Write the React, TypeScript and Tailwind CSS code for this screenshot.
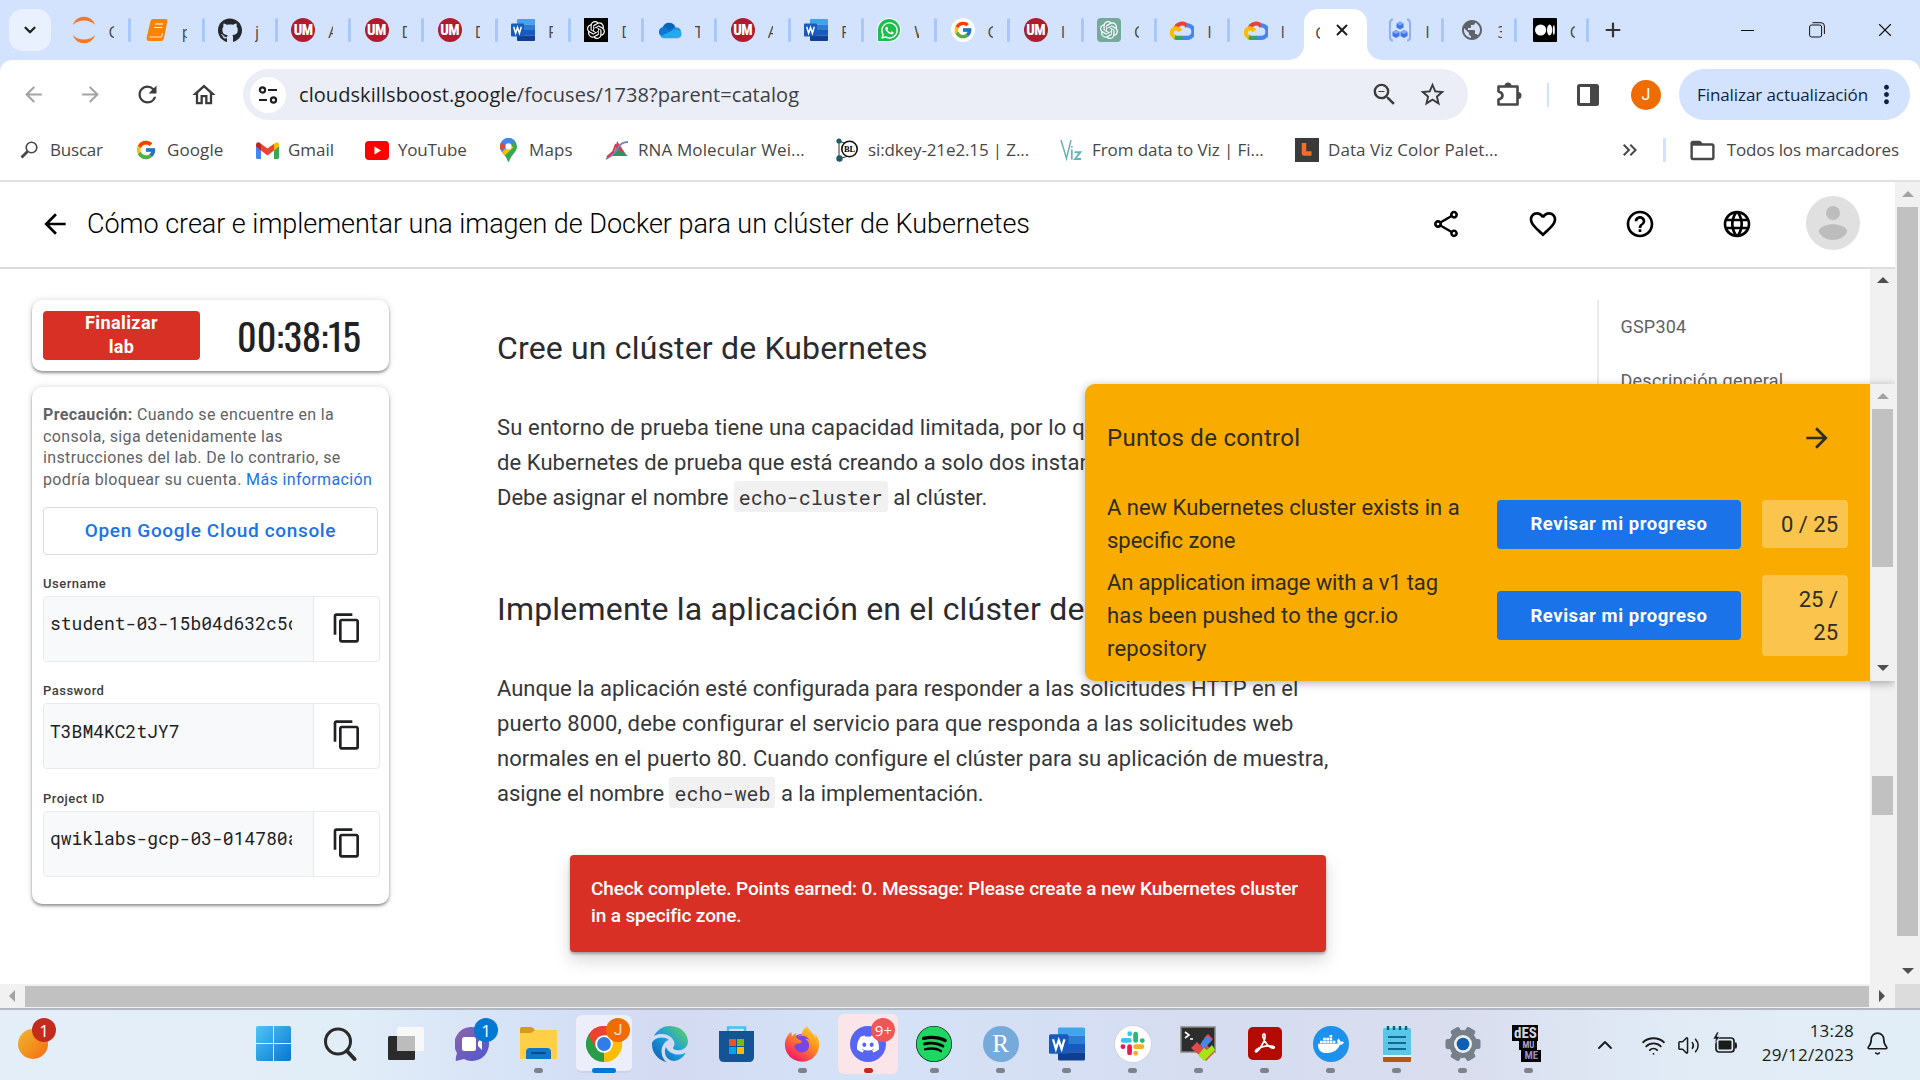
import React from 'react';
import { FaGithub, FaWhatsapp, FaSpotify, FaDiscord, FaDocker, FaEdge, FaFirefoxBrowser } from 'react-icons/fa6';
import { SiOpenai } from 'react-icons/si';
import { FcGoogle } from 'react-icons/fc';
import {
  MdArrowBack, MdArrowForward, MdRefresh, MdOutlineHome, MdStarBorder, MdOutlineShare,
  MdFavoriteBorder, MdHelpOutline, MdLanguage, MdContentCopy, MdFolderOpen, MdKeyboardDoubleArrowRight,
  MdMoreVert, MdPublic, MdZoomOut,
} from 'react-icons/md';
import { ChevronDown, ChevronUp, Plus, Minus, X, Bell, Wifi, Volume2 } from 'lucide-react';

type Node = React.ReactNode;

/* ---------- brand glyphs ---------- */

const Jupyter = () => (
  <svg width="24" height="28" viewBox="0 0 24 28">
    <path d="M1 9C4-2 20-2 23 9C18 3 6 3 1 9Z" fill="#f37726" />
    <path d="M1 19C4 30 20 30 23 19C18 25 6 25 1 19Z" fill="#f37726" />
  </svg>
);

const Book = () => (
  <svg width="22" height="24" viewBox="0 0 22 24">
    <path d="M6.500 1H19.500Q22 1 21.300 4L18 20Q17.500 23 15 23H3Q0 23 .8 19L4.300 4Q5 1 6.500 1Z" fill="#f98207" />
    <path d="M9 6h8M8.200 9.500h8" stroke="#fff" strokeWidth="1.200" />
    <path d="M3 19H15.500L16.500 15" fill="none" stroke="#fde0bd" strokeWidth="1.100" />
  </svg>
);

const UM = () => (
  <span className="flex size-6 items-center justify-center rounded-full bg-[#b01c2e] font-['Roboto_Condensed',Roboto,sans-serif] text-[15px] font-extrabold tracking-[-0.5px] text-white">
    UM
  </span>
);

const Word = ({ size = 24 }: { size?: number }) => (
  <svg width={size} height={size} viewBox="0 0 24 24">
    <path d="M6 2q0-1 1-1h16q1 0 1 1v4.500H6Z" fill="#41a5ee" />
    <path d="M6 6.500h18V12H6Z" fill="#2b7cd3" />
    <path d="M6 12h18v5.500H6Z" fill="#185abd" />
    <path d="M6 17.500h18V22q0 1-1 1H7q-1 0-1-1Z" fill="#103f91" />
    <rect x="0" y="5.500" width="13" height="13" rx="1" fill="#185abd" />
    <path d="M2.700 8.800 4.600 15.300 6.500 9.500 8.400 15.300 10.300 8.800" stroke="#fff" strokeWidth="1.500" fill="none" />
  </svg>
);

const OneDrive = () => (
  <svg width="25" height="17" viewBox="0 0 25 17">
    <path d="M4 13A5 5 0 0 1 5 5 7 7 0 0 1 18 4.500L14 11Z" fill="#0364b8" />
    <path d="M5 15A5 5 0 0 1 4 5.500Q8 4 11 7L16 14Z" fill="#0f78d4" />
    <path d="M13 8 18 5Q23 5 24 9L19 12Z" fill="#1490df" />
    <path d="M2.500 14.500 15 8.500Q20 6 24 9.500 26 16 20 16.500H6Q4 16.500 2.500 14.500Z" fill="#28a8ea" />
  </svg>
);

const GptTile = ({ green = false }: { green?: boolean }) => (
  <span className={green ? 'flex size-6 items-center justify-center rounded-[4px] bg-[#74aa9c] text-white' : 'flex size-6 items-center justify-center bg-black text-white'}>
    <SiOpenai size={18} />
  </span>
);

const WhatsApp = () => (
  <span className="flex size-6 items-center justify-center rounded-full rounded-bl-[3px] bg-white">
    <span className="flex size-[22px] items-center justify-center rounded-full rounded-bl-[3px] bg-[#1ebe4d] text-white">
      <FaWhatsapp size={19} />
    </span>
  </span>
);

const GoogleTab = () => (
  <span className="flex size-6 items-center justify-center rounded-full bg-white"><FcGoogle size={20} /></span>
);

const Cloud = () => (
  <svg width="24" height="20" viewBox="0 0 24 20" fill="none" strokeWidth="4.200">
    <path d="M5.500 9A6.600 6.600 0 0 1 17.500 6.500" stroke="#ea4335" />
    <path d="M16.500 5.500A6 6 0 0 1 18 17.800H12" stroke="#4285f4" />
    <path d="M12.500 17.800H6.500L4 17" stroke="#34a853" />
    <path d="M5 16.800A4.200 4.200 0 0 1 7 8.600Q9 8.800 10.500 11" stroke="#fbbc05" />
  </svg>
);

const Cubes = () => (
  <svg width="24" height="24" viewBox="0 0 24 24">
    <path d="M5 1.500Q2 1.500 2 5v4.500Q2 12 .8 12 2 12 2 14.500V19q0 3.500 3 3.500M19 1.500q3 0 3 3.500v4.500q0 2.500 1.200 2.500-1.200 0-1.200 2.500V19q0 3.500-3 3.500" fill="none" stroke="#8fb0f7" strokeWidth="2" />
    <path d="m12 3.500 3.500 2v4L12 11.500l-3.500-2v-4ZM8 12l3.500 2v4L8 20l-3.500-2v-4ZM16 12l3.500 2v4L16 20l-3.500-2v-4Z" fill="#3f74e8" />
    <path d="m12 3.500 3.500 2-3.500 2-3.500-2ZM8 12l3.500 2L8 16l-3.500-2ZM16 12l3.500 2-3.500 2-3.500-2Z" fill="#86a9f7" />
  </svg>
);

const Medium = () => (
  <svg width="24" height="24" viewBox="0 0 24 24">
    <rect width="24" height="24" rx="1" fill="#000" />
    <circle cx="7.600" cy="12" r="5.600" fill="#fff" />
    <ellipse cx="16.600" cy="12" rx="2.600" ry="5.400" fill="#fff" />
    <ellipse cx="20.800" cy="12" rx="1" ry="4.800" fill="#fff" />
  </svg>
);

const Gmail = () => (
  <svg width="23" height="17" viewBox="0 0 23 17">
    <path d="M0 3v12.500Q0 17 1.500 17H5V7Z" fill="#4285f4" />
    <path d="M23 3v12.500q0 1.500-1.500 1.500H18V7Z" fill="#34a853" />
    <path d="M5 2v6.500L0 4.500V2.500Q.5-1 4 .8Z" fill="#c5221f" />
    <path d="M18 2v6.500l5-4V2.500Q22.500-1 19 .8Z" fill="#fbbc04" />
    <path d="M5 1.800 11.500 6.500 18 1.800v6.700L11.500 13.500 5 8.500Z" fill="#ea4335" />
  </svg>
);

const YouTube = () => (
  <svg width="24" height="19" viewBox="0 0 24 19">
    <rect width="24" height="19" rx="4" fill="#f00" />
    <path d="M9.500 5.500v8L16 9.500Z" fill="#fff" />
  </svg>
);

const Maps = () => (
  <svg width="17" height="24" viewBox="0 0 17 24">
    <clipPath id="pin"><path d="M8.500 0A8.500 8.500 0 0 1 17 8.500C17 14 11 17 9.200 23.300Q8.500 24.500 7.800 23.300C6 17 0 14 0 8.500A8.500 8.500 0 0 1 8.500 0Z" /></clipPath>
    <g clipPath="url(#pin)">
      <rect width="17" height="24" fill="#34a853" />
      <path d="M0 0H17L0 20Z" fill="#4285f4" />
      <path d="M-1 3 7 8-1 14Z" fill="#ea4335" />
      <path d="M8 8-1 17 3 19 14 9Z" fill="#fbbc04" />
    </g>
    <circle cx="8.500" cy="8.300" r="3.100" fill="#fff" />
  </svg>
);

const Rna = () => (
  <svg width="24" height="20" viewBox="0 0 24 20">
    <path d="M12 1 22 16H9Z" fill="#d5394b" />
    <path d="M13 9 23 16H7Z" fill="#2f9460" />
    <path d="M1 19Q10 14 13 8T23 2" fill="none" stroke="#6f86b8" strokeWidth="2" />
    <path d="M2 17 8 12 11 4" fill="none" stroke="#d5394b" strokeWidth="2" />
  </svg>
);

const Bl = () => (
  <svg width="22" height="24" viewBox="0 0 22 24">
    <path d="M3 3v18L12 18M3 3l8 3" stroke="#333" fill="none" />
    <circle cx="3" cy="3" r="2.600" fill="#1d5c63" />
    <circle cx="3.500" cy="20.500" r="3.200" fill="#1d5c63" />
    <circle cx="13.500" cy="11" r="7.700" fill="#fff" stroke="#111" strokeWidth="1.600" />
    <text x="13.500" y="14" textAnchor="middle" fontFamily="Liberation Serif, serif" fontWeight="700" fontSize="8.500">BL</text>
  </svg>
);

const Viz = () => (
  <svg width="22" height="22" viewBox="0 0 22 22" fill="none" stroke="#69b3b2">
    <path d="M1 1 6.500 19.500 11 1" strokeWidth="1.500" />
    <path d="M11.800 10.500v10M11.800 7v1.500" strokeWidth="1.800" />
    <path d="M14.500 13.300h5.800L15 20h6" strokeWidth="1.900" />
  </svg>
);

const LTile = () => (
  <svg width="24" height="24" viewBox="0 0 24 24">
    <rect width="24" height="24" fill="#3a3a3a" />
    <path d="M9 5v10.500h7.500" fill="none" stroke="#fb6a28" strokeWidth="4.500" strokeLinejoin="round" />
  </svg>
);

const SearchGlyph = () => (
  <svg width="18" height="18" viewBox="0 0 18 18" fill="none" stroke="#474747">
    <circle cx="11.500" cy="6.500" r="5.300" strokeWidth="1.600" />
    <path d="M7.500 10.500 1.500 16.500" strokeWidth="2.800" />
  </svg>
);

const Puzzle = () => (
  <svg width="26" height="26" viewBox="0 0 26 26">
    <path d="M2.500 4.500H21.500V22.500H2.500V17.500Q6.500 16.500 6.500 13.500 6.500 10.500 2.500 9.500Z" fill="none" stroke="#474747" strokeWidth="2.600" strokeLinejoin="round" />
    <path d="M8.500 4A3.500 3.500 0 0 1 15.500 4ZM22 10A3.500 3.500 0 0 1 22 17Z" fill="#474747" />
  </svg>
);

/* ---------- browser chrome ---------- */

const leftTabs: [Node, string][] = [
  [<Jupyter />, 'C'], [<Book />, 'p'], [<FaGithub size={25} color="#24292f" />, 'j'], [<UM />, 'A'], [<UM />, 'D'], [<UM />, 'D'],
  [<Word />, 'P'], [<GptTile />, 'D'], [<OneDrive />, 'T'], [<UM />, 'A'], [<Word />, 'P'], [<WhatsApp />, 'W'],
  [<GoogleTab />, 'G'], [<UM />, 'I'], [<GptTile green />, 'C'], [<Cloud />, 'I'], [<Cloud />, 'I'],
];
const rightTabs: [Node, string][] = [
  [<Cubes />, 'I'], [<MdPublic size={26} color="#5f6368" />, '3'], [<Medium />, 'C'],
];

const Tab = ({ icon, label, last = false, wide = false }: { icon: Node; label: string; last?: boolean; wide?: boolean }) => (
  <div className={wide ? 'flex h-6 w-[73.25px] shrink-0 items-center' : 'flex h-6 w-[72.2px] shrink-0 items-center'}>
    <span className={wide ? 'ml-[13.5px] flex w-6 justify-center' : 'ml-4 flex w-6 justify-center'}>{icon}</span>
    <span className="ml-[13px] w-[5px] overflow-hidden pt-1 text-[16px] leading-5 text-[#474747]">{label}</span>
    {!last && <span className="ml-auto h-6 w-[3px] rounded-sm bg-[#a8c7fa]" />}
  </div>
);

const Notch = ({ right = false }: { right?: boolean }) => (
  <svg width="15" height="15" viewBox="0 0 15 15" className={right ? 'absolute -right-[15px] bottom-0 -scale-x-100' : 'absolute bottom-0 -left-[15px]'}>
    <path d="M15 0V15H0A15 15 0 0 0 15 0Z" fill="#fff" />
  </svg>
);

const TabStrip = () => (
  <div className="flex h-[60px] items-center bg-[#d3e3fd]">
    <div className="ml-[9px] flex size-[42px] items-center justify-center rounded-[14px] bg-[#e9f1fe]">
      <ChevronDown size={18} strokeWidth={3} color="#1f1f1f" />
    </div>
    <div className="ml-[7px] flex">
      {leftTabs.map(([icon, label], i) => <Tab key={i} icon={icon} label={label} wide last={i === 16} />)}
    </div>
    <div className="relative ml-px flex h-[51px] w-[63px] items-center self-end rounded-t-[14px] bg-white">
      <Notch />
      <span className="mb-1 ml-[11px] w-[5px] overflow-hidden text-[16px] text-[#474747]">C</span>
      <X size={18} strokeWidth={2.6} color="#1f1f1f" className="mb-[9px] ml-[13px]" />
      <Notch right />
    </div>
    <div className="ml-[5px] flex">
      {rightTabs.map(([icon, label], i) => <Tab key={i} icon={icon} label={label} />)}
    </div>
    <Plus size={22} strokeWidth={2.4} color="#333" className="ml-[13px]" />
    <div className="ml-auto flex items-center text-[#111]">
      <Minus size={21} strokeWidth={1.2} />
      <svg width="16" height="16" viewBox="0 0 16 16" fill="none" stroke="currentColor" className="ml-[51px]">
        <rect x=".6" y="3" width="12" height="12" rx="2" />
        <path d="M3.500 .7H12Q15.400 .7 15.400 4V12" />
      </svg>
      <X size={22} strokeWidth={1.2} className="mr-6 ml-[49px]" />
    </div>
  </div>
);

const Toolbar = () => (
  <div className="bg-[#d3e3fd]">
    <div className="flex h-[60px] items-center rounded-t-[12px] bg-white pt-[9px]">
      <MdArrowBack size={25} color="#a3a3a3" className="ml-[21px]" />
      <MdArrowForward size={25} color="#a3a3a3" className="ml-8" />
      <MdRefresh size={27} color="#3c3c3c" className="ml-[31px]" />
      <MdOutlineHome size={28} color="#3c3c3c" className="ml-[29px]" />
      <div className="ml-[25px] flex h-[51px] w-[1225px] items-center rounded-full bg-[#ebeef7]">
        <div className="ml-[7px] flex size-9 items-center justify-center rounded-full bg-white">
          <svg width="20" height="18" viewBox="0 0 20 18" fill="none" stroke="#1f1f1f" strokeWidth="2.200">
            <circle cx="4.500" cy="4" r="2.600" /><path d="M10 4h9M1 14h8" /><circle cx="15.500" cy="14" r="2.600" />
          </svg>
        </div>
        <span className="ml-[13px] text-[20px] tracking-[0.07px] text-[#3c4043]">
          <span className="text-[#1f1f1f]">cloudskillsboost.google</span>/focuses/1738?parent=catalog
        </span>
        <MdZoomOut size={29} color="#3c3c3c" className="mr-[19px] ml-auto" />
        <MdStarBorder size={29} color="#3c3c3c" className="mr-[21px]" />
      </div>
      <span className="ml-7 flex"><Puzzle /></span>
      <span className="ml-[25px] h-6 w-[2px] bg-[#d3e3fd]" />
      <svg width="22" height="22" viewBox="0 0 22 22" className="ml-7">
        <rect x="1.500" y="1.500" width="19" height="19" rx="1" fill="none" stroke="#474747" strokeWidth="3" />
        <rect x="13" y="1" width="8" height="20" fill="#474747" />
      </svg>
      <span className="ml-8 flex size-[30px] items-center justify-center rounded-full bg-[#ef6c00] font-['Roboto',sans-serif] text-[16px] text-white">J</span>
      <div className="ml-[18px] flex h-[51px] w-[231px] items-center rounded-full bg-[#d3e3fd] pl-[18px] text-[17px] tracking-[-0.08px] whitespace-nowrap text-[#0b1f4b]">
        Finalizar actualización
        <MdMoreVert size={29} className="ml-1" />
      </div>
    </div>
  </div>
);

const bookmarks: { icon: Node; label: string; cls: string }[] = [
  { icon: <SearchGlyph />, label: 'Buscar', cls: 'w-[117px] tracking-[-0.2px]' },
  { icon: <FcGoogle size={22} />, label: 'Google', cls: 'w-[121px] tracking-[0.1px]' },
  { icon: <Gmail />, label: 'Gmail', cls: 'w-[110px]' },
  { icon: <YouTube />, label: 'YouTube', cls: 'w-[131px] tracking-[-0.2px]' },
  { icon: <Maps />, label: 'Maps', cls: 'w-[109px] tracking-[0.1px]' },
  { icon: <Rna />, label: 'RNA Molecular Wei...', cls: 'w-[230px] tracking-[0.12px]' },
  { icon: <Bl />, label: 'si:dkey-21e2.15 | Z...', cls: 'w-[224px] tracking-[-0.12px]' },
  { icon: <Viz />, label: 'From data to Viz | Fi...', cls: 'w-[236px] tracking-[-0.08px]' },
  { icon: <LTile />, label: 'Data Viz Color Palet...', cls: 'w-[220px] tracking-[0.08px]' },
];

const Bookmarks = () => (
  <div className="flex h-[62px] items-center border-b-2 border-[#e0e0e0] bg-white pl-[17px] text-[17px] whitespace-nowrap text-[#474747]">
    {bookmarks.map((b) => (
      <div key={b.label} className={'flex shrink-0 items-center ' + b.cls}>
        <span className="mr-[9px] flex w-6 justify-center">{b.icon}</span>
        {b.label}
      </div>
    ))}
    <MdKeyboardDoubleArrowRight size={24} className="ml-auto" />
    <span className="ml-[21px] h-6 w-[3px] bg-[#d3e3fd]" />
    <MdFolderOpen size={29} className="mr-[10px] ml-[22px]" />
    <span className="mr-[21px] tracking-[-0.12px]">Todos los marcadores</span>
  </div>
);

/* ---------- lab page ---------- */

const PageHeader = () => (
  <div className="flex h-[87px] items-center border-b-2 border-[#dadce0] bg-white text-black">
    <MdArrowBack size={32} className="-mt-[2px] ml-[39px]" />
    <h1 className="ml-4 text-[27px] font-light tracking-[-0.03px] whitespace-nowrap">
      Cómo crear e implementar una imagen de Docker para un clúster de Kubernetes
    </h1>
    <div className="-mt-[2px] ml-auto flex items-center gap-[65px]">
      <MdOutlineShare size={32} /><MdFavoriteBorder size={32} /><MdHelpOutline size={32} /><MdLanguage size={32} />
    </div>
    <svg width="54" height="54" viewBox="0 0 54 54" className="-mt-1 mr-[35px] ml-[53.5px]">
      <circle cx="27" cy="27" r="27" fill="#e0e0e0" />
      <circle cx="27" cy="17" r="7" fill="#bdbdbd" />
      <path d="M12.500 35C16 26 38 26 41.500 35 37 47 17 47 12.500 35Z" fill="#bdbdbd" />
    </svg>
  </div>
);

const Field = ({ label, value }: { label: string; value: string }) => (
  <div className="mb-[21.5px]">
    <div className="mb-1 text-[13px] leading-4 font-medium tracking-[0.5px] text-[#3c4043]">{label}</div>
    <div className="flex h-[66px] w-[337px] overflow-hidden rounded-[4px] border border-[#e8eaed]">
      <div className="w-[270px] border-r border-[#e8eaed] bg-[#f8f9fb] pt-[13.5px] pl-[6px]">
        <div className="w-[242px] overflow-hidden font-['Roboto_Mono','Liberation_Mono',monospace] text-[18px] leading-[26px] whitespace-nowrap text-[#202124]">{value}</div>
      </div>
      <div className="flex flex-1 items-center justify-center pb-[2px]"><MdContentCopy size={32} color="#202124" /></div>
    </div>
  </div>
);

const card = 'rounded-[10px] bg-white shadow-[0_2px_3px_rgba(0,0,0,0.38),0_0_7px_rgba(0,0,0,0.13)]';

const LabPanel = () => (
  <aside className="ml-8 w-[357px] shrink-0 pt-[31px]">
    <div className={'flex h-[71px] items-center pl-[11px] ' + card}>
      <button className="h-[49px] w-[157px] rounded-[4px] bg-[#d93025] px-8 pb-[3px] text-[18px] leading-6 font-bold tracking-[0.4px] text-white">Finalizar lab</button>
      <span className="-mt-[2px] ml-[37px] font-['Oswald','Roboto_Condensed',sans-serif] text-[38px] leading-none text-[#202124]">00:38:15</span>
    </div>
    <div className={'mt-4 h-[517px] px-[11px] pt-[17px] ' + card}>
      <p className="text-[16px] leading-[21.6px] tracking-[0.36px] whitespace-nowrap text-[#5f6368]">
        <b>Precaución:</b> Cuando se encuentre en la<br />consola, siga detenidamente las<br />
        instrucciones del lab. De lo contrario, se<br />podría bloquear su cuenta.{' '}
        <a className="text-[#1a73e8]">Más información</a>
      </p>
      <button className="mt-[17px] mb-[20.5px] h-12 w-[335px] rounded-[4px] border border-[#dadce0] text-[19px] font-medium tracking-[0.65px] text-[#1a73e8]">
        Open Google Cloud console
      </button>
      <Field label="Username" value="student-03-15b04d632c5d" />
      <Field label="Password" value="T3BM4KC2tJY7" />
      <Field label="Project ID" value="qwiklabs-gcp-03-014780a" />
    </div>
  </aside>
);

const Code = ({ children }: { children: Node }) => (
  <code className="inline-block h-[31px] rounded-[3px] bg-[#f1f1f1] px-[5px] align-baseline font-['Roboto_Mono','Liberation_Mono',monospace] text-[20px] leading-[32px] tracking-normal text-[#37383b]">{children}</code>
);

const Article = () => (
  <main className="ml-[108px] w-[860px] shrink-0 text-[22px] leading-[35px] whitespace-nowrap text-[#35373b]">
    <h2 className="mt-[59px] text-[32px] leading-10 tracking-[0.16px] text-[#2a2b2e]">Cree un clúster de Kubernetes</h2>
    <p className="mt-[42px] tracking-[0.15px]">
      Su entorno de prueba tiene una capacidad limitada, por lo que<br />
      <span className="tracking-[0.08px]">de Kubernetes de prueba que está creando a solo dos instancias.</span>
    </p>
    <p className="h-[35px]">Debe asignar el nombre <Code>echo-cluster</Code> al clúster.</p>
    <h2 className="mt-[74px] text-[32px] leading-10 tracking-[0.2px] text-[#2a2b2e]">Implemente la aplicación en el clúster de</h2>
    <p className="mt-[42px]">
      <span className="tracking-[-0.01px]">Aunque la aplicación esté configurada para responder a las solicitudes HTTP en el</span><br />
      <span className="tracking-[0.17px]">puerto 8000, debe configurar el servicio para que responda a las solicitudes web</span><br />
      <span className="tracking-[0.07px]">normales en el puerto 80. Cuando configure el clúster para su aplicación de muestra,</span>
    </p>
    <p className="h-[35px] tracking-[-0.06px]">asigne el nombre <Code>echo-web</Code> a la implementación.</p>
  </main>
);

const Toc = () => (
  <nav className="mt-[31px] ml-auto h-[300px] w-[273px] border-l-2 border-[#e8eaed] pl-[21.5px] text-[18px] leading-6 text-[#5f6368]">
    <div className="mt-[15px] tracking-[0.2px]">GSP304</div>
    <div className="mt-[30px] tracking-[0.25px]">Descripción general</div>
  </nav>
);

const Check = ({ text, score, tall = false }: { text: Node; score: string; tall?: boolean }) => (
  <div className="flex items-center">
    <div className="w-[390px] whitespace-nowrap">{text}</div>
    <button className="h-[49px] w-[244px] rounded-[4px] bg-[#1a73e8] text-[18.5px] leading-6 font-bold tracking-[0.55px] text-white">Revisar mi progreso</button>
    <div className={tall ? 'ml-[21px] h-[81px] w-[86px] rounded-[4px] bg-white/30 py-2 pr-[10px] pl-7 text-right' : 'ml-[21px] h-12 w-[86px] rounded-[4px] bg-white/30 py-2 pr-[10px] text-right whitespace-nowrap'}>{score}</div>
  </div>
);

const Arrow = ({ dir, dim = false }: { dir: 'up' | 'down' | 'left' | 'right'; dim?: boolean }) => {
  const d = { up: 'M0 8 6 2 12 8Z', down: 'M0 3 6 9 12 3Z', left: 'M8 0 2 6 8 12Z', right: 'M3 0 9 6 3 12Z' }[dir];
  return <svg width="12" height="12" viewBox="0 0 12 12"><path d={d} fill={dim ? '#a3a3a3' : '#4f4f4f'} /></svg>;
};

const Checkpoints = () => (
  <section className="absolute top-[115px] left-[1085px] flex h-[297px] w-[810px] overflow-hidden rounded-l-[10px] bg-[#f9ab00] shadow-[0_2px_10px_rgba(0,0,0,0.32)]">
    <div className="w-[785px] pl-[22px] text-[22px] leading-[33px] text-[#2f2c22]">
      <div className="mt-9 flex items-center justify-between text-[24px] leading-9 tracking-[0.3px]">
        Puntos de control<MdArrowForward size={32} className="mr-[37px]" />
      </div>
      <div className="mt-5 flex flex-col gap-[9px] pt-[15px]">
        <Check text={<>A new Kubernetes cluster exists in a<br />specific zone</>} score="0 / 25" />
        <Check text={<><span className="tracking-[-0.14px]">An application image with a v1 tag</span><br /><span className="tracking-[0.15px]">has been pushed to the gcr.io<br />repository</span></>} score="25 / 25" tall />
      </div>
    </div>
    <div className="flex w-[25px] flex-col items-center justify-between bg-[#f1f1f1] py-[7px]">
      <Arrow dir="up" dim />
      <div className="mt-1.5 mb-auto h-[158px] w-[21px] bg-[#c1c1c1]" />
      <Arrow dir="down" />
    </div>
  </section>
);

const Toast = () => (
  <div className="absolute top-[586px] left-[570px] h-[97px] w-[756px] rounded-[4px] bg-[#d93025] px-[21px] pt-5 text-[19px] leading-[27px] font-medium tracking-[-0.13px] whitespace-nowrap text-white shadow-[0_2px_3px_rgba(0,0,0,0.3),0_8px_18px_rgba(0,0,0,0.16)]">
    Check complete. Points earned: 0. Message: Please create a new Kubernetes cluster<br />in a specific zone.
  </div>
);

const Page = () => (
  <div className="flex h-[802px]">
    <div className="flex w-[1895px] flex-col font-['Roboto',sans-serif]">
      <PageHeader />
      <div className="relative flex h-[715px] overflow-hidden bg-white">
        <LabPanel />
        <Article />
        <Toc />
        <div className="flex w-[25px] shrink-0 flex-col items-center bg-[#f1f1f1] pt-[6px]">
          <Arrow dir="up" />
          <div className="mt-[489px] h-[39px] w-[21px] bg-[#c1c1c1]" />
        </div>
        <Checkpoints />
        <Toast />
      </div>
    </div>
    <div className="flex w-[25px] flex-col items-center bg-[#f1f1f1] pt-[7px] pb-[7px]">
      <Arrow dir="up" dim />
      <div className="mt-[6px] h-[729px] w-[21px] bg-[#c1c1c1]" />
      <span className="mt-auto flex"><Arrow dir="down" /></span>
    </div>
  </div>
);

const HScroll = () => (
  <div className="flex h-[24px] items-center bg-[#f1f1f1]">
    <span className="flex w-[25px] justify-center"><Arrow dir="left" dim /></span>
    <span className="h-[21px] w-[1844px] bg-[#c1c1c1]" />
    <span className="flex w-[26px] justify-center"><Arrow dir="right" /></span>
    <span className="h-full w-[25px] bg-[#dcdcdc]" />
  </div>
);

/* ---------- taskbar ---------- */

const Start = () => (
  <svg width="35" height="35" viewBox="0 0 35 35" className="mr-px">
    <defs><linearGradient id="win" x1="0" y1="0" x2="1" y2="1" gradientUnits="objectBoundingBox"><stop stopColor="#4cc8f8" /><stop offset="1" stopColor="#0a74d0" /></linearGradient></defs>
    <path d="M0 2Q0 0 2 0H17V17H0ZM18 0H33Q35 0 35 2V17H18ZM0 18H17V35H2Q0 35 0 33ZM18 18H35V33Q35 35 33 35H18Z" fill="url(#win)" />
  </svg>
);
const Search = () => (
  <svg width="34" height="34" viewBox="0 0 34 34" fill="none" stroke="#2b2b2b">
    <circle cx="15" cy="14.500" r="12.500" strokeWidth="3" /><path d="M24 24 31.500 32" strokeWidth="4" strokeLinecap="round" />
  </svg>
);
const TaskView = () => (
  <svg width="36" height="34" viewBox="0 0 36 34">
    <rect x="0" y="9" width="27" height="24" rx="1.500" fill="#2b2b2b" />
    <rect x="9" y="0" width="27" height="24" rx="1.500" fill="#f8f8f8" />
    <rect x="9" y="9" width="18" height="15" fill="#bcbcbc" />
  </svg>
);
const Chat = () => (
  <svg width="34" height="34" viewBox="0 0 34 34">
    <defs><linearGradient id="chat" x1="0" y1="0" x2="1" y2="1"><stop stopColor="#8f63a8" /><stop offset="1" stopColor="#4f57d0" /></linearGradient></defs>
    <path d="M17 0A17 17 0 1 1 9 32L1 34Q0 33 2 26A17 17 0 0 1 17 0Z" fill="url(#chat)" />
    <rect x="7" y="10" width="14" height="14" rx="2.500" fill="#fff" /><path d="m23 15 4-4v12l-4-4Z" fill="#fff" />
  </svg>
);
const Explorer = () => (
  <svg width="37" height="33" viewBox="0 0 37 33">
    <path d="M0 2Q0 0 2 0H11Q13 0 15 3V12H0Z" fill="#dc9a10" />
    <path d="M0 7Q0 6 1 6H11L15 3H36Q37 3 37 4V31Q37 32 36 32H1Q0 32 0 31Z" fill="#ffcf48" />
    <path d="M6 32V25Q6 21 10 21H27Q31 21 31 25V32Z" fill="#1277c8" /><rect x="11" y="25" width="15" height="2" rx="1" fill="#064a86" />
  </svg>
);
const Chrome = () => (
  <svg width="36" height="36" viewBox="-18 -18 36 36">
    <path d="M0 0-15.600-9A18 18 0 0 1 15.600-9Z" fill="#ea4335" />
    <path d="M0 0 15.600-9A18 18 0 0 1 0 18Z" fill="#fbbc05" />
    <path d="M0 0 0 18A18 18 0 0 1-15.600-9Z" fill="#2a9d48" />
    <path d="M0-9H15.600A18 18 0 0 0-15.600-9L-7.800 4.500Z" fill="#ea4335" />
    <path d="M7.800 4.500 0 18A18 18 0 0 0 15.600-9H0Z" fill="#fbbc05" />
    <circle r="8.800" fill="#fff" /><circle r="6.900" fill="#2f7de9" />
  </svg>
);
const Edge = () => (
  <>
    <svg width="0" height="0" className="absolute"><defs><linearGradient id="edge" x1="0" y1="1" x2="1" y2="0"><stop stopColor="#0c59a4" /><stop offset=".5" stopColor="#1b9de2" /><stop offset="1" stopColor="#66d54d" /></linearGradient></defs></svg>
    <FaEdge size={36} fill="url(#edge)" />
  </>
);
const Store = () => (
  <svg width="35" height="36" viewBox="0 0 35 36">
    <path d="M9 8V1.500H26V8" fill="none" stroke="#3fc4f4" strokeWidth="2.500" />
    <path d="M0 5H35V31Q35 36 30 36H5Q0 36 0 31Z" fill="#135594" />
    <path d="M10 13h7v7h-7Z" fill="#f25022" /><path d="M18 13h7v7h-7Z" fill="#7fba00" /><path d="M10 21h7v7h-7Z" fill="#00a4ef" /><path d="M18 21h7v7h-7Z" fill="#ffb900" />
  </svg>
);
const Firefox = () => (
  <span className="relative flex">
    <svg width="36" height="36" viewBox="0 0 36 36" className="absolute">
      <defs><linearGradient id="fox" x1="1" y1="0" x2=".3" y2="1"><stop stopColor="#ffe226" /><stop offset=".5" stopColor="#ff8a1f" /><stop offset="1" stopColor="#f5156c" /></linearGradient></defs>
      <circle cx="18" cy="19" r="11" fill="#7a45e0" />
    </svg>
    <FaFirefoxBrowser size={36} fill="url(#fox)" className="relative" />
  </span>
);
const Round = ({ cls, children }: { cls: string; children: Node }) => (
  <span className={'flex size-9 items-center justify-center rounded-full ' + cls}>{children}</span>
);
const Slack = () => (
  <svg width="25" height="25" viewBox="0 0 24 24" strokeWidth="4.600" strokeLinecap="round">
    <path d="M3 9h6" stroke="#36c5f0" /><path d="M9.300 2.600v.1" stroke="#36c5f0" /><path d="M15 3v6" stroke="#2eb67d" /><path d="M21.300 9.200h.1" stroke="#2eb67d" />
    <path d="M15 15h6" stroke="#ecb22e" /><path d="M15 21.300v.1" stroke="#ecb22e" /><path d="M9.200 15v6" stroke="#e01e5a" /><path d="M2.800 15h.1" stroke="#e01e5a" />
  </svg>
);
const Moba = () => (
  <svg width="38" height="38" viewBox="0 0 38 38">
    <rect x="1" y="2" width="34" height="25" fill="#2d2d2d" stroke="#8b8b80" strokeWidth="1.500" />
    <path d="m5 7 4 3-4 3M10 14h3" stroke="#fff" strokeWidth="1.600" fill="none" />
    <path d="m11 23 6-6 5 5 5-6-3-3 4-4 5 5-6 6 7 8-8 8Z" fill="#e34a4a" />
    <path d="m23 15 4-4 5 4-8 9-4-4Z" fill="#4a86e8" /><path d="m18 30 6 6 11-11-3-5-5 5-3-2Z" fill="#a4e516" />
  </svg>
);
const Acrobat = () => (
  <svg width="34" height="33" viewBox="0 0 34 33">
    <rect width="34" height="33" rx="5" fill="#b30b00" />
    <path d="M8 25C12 23 18 12 17 8 16.500 6 14 7 15 10 16 15 22 22 26 21 28 19 20 18 14 20 10 21 6 24 8 25Z" fill="none" stroke="#fff" strokeWidth="1.700" />
  </svg>
);
const Notepad = () => (
  <svg width="28" height="36" viewBox="0 0 28 36">
    <rect y="30" width="28" height="6" rx="1" fill="#b4590f" /><rect y="2" width="28" height="29" rx="1.500" fill="#5cc6e6" /><path d="M0 30h28" stroke="#f0f0f0" strokeWidth="2" />
    <path d="M5 0v4M11 0v4M17 0v4M23 0v4" stroke="#0d5b80" strokeWidth="2.500" /><path d="M5 11h18M5 17h18M5 23h18" stroke="#0f6a93" strokeWidth="2" />
  </svg>
);
const Gear = () => (
  <svg width="36" height="36" viewBox="-18 -18 36 36">
    <g fill="#76808a">
      <circle r="14" />
      <rect x="-5" y="-17.500" width="10" height="35" rx="2" transform="rotate(30)" /><rect x="-5" y="-17.500" width="10" height="35" rx="2" transform="rotate(90)" /><rect x="-5" y="-17.500" width="10" height="35" rx="2" transform="rotate(150)" />
    </g>
    <circle r="9" fill="#eee" /><circle r="6.300" fill="#0f5fb4" />
  </svg>
);
const Desmume = () => (
  <span className="mr-1 flex flex-col font-['Roboto_Condensed',Roboto,sans-serif] font-bold text-[#d5d5e4]">
    <span className="h-4 w-[26px] bg-black text-center text-[15px] leading-4">dES</span>
    <span className="ml-[7px] h-[9px] w-[18px] bg-black text-center text-[9px] leading-[9px] text-[#a5a3d6]">MU</span>
    <span className="ml-[9px] h-[12px] w-5 bg-black text-center text-[11px] leading-[12px] text-[#8f8cd0]">ME</span>
  </span>
);

const Badge = ({ cls, children }: { cls: string; children: Node }) => (
  <span className={'absolute flex size-6 items-center justify-center rounded-full leading-none text-white ' + cls}>{children}</span>
);

const apps: { icon: Node; mark?: 'dot' | 'active' | 'alert'; badge?: Node }[] = [
  { icon: <Start /> }, { icon: <Search /> }, { icon: <TaskView /> },
  { icon: <Chat />, badge: <Badge cls="top-[8px] left-[35px] bg-[#0078d4] text-[17px]">1</Badge> },
  { icon: <Explorer />, mark: 'dot' },
  { icon: <Chrome />, mark: 'active', badge: <Badge cls="top-[8px] left-[35px] bg-[#ef6c00] font-['Roboto',sans-serif] text-[15px] text-white/80">J</Badge> },
  { icon: <Edge /> }, { icon: <Store /> }, { icon: <Firefox />, mark: 'dot' },
  { icon: <Round cls="bg-[#5865f2] text-white"><FaDiscord size={24} /></Round>, mark: 'alert', badge: <Badge cls="top-[8px] left-[36px] bg-[#f05656] text-[15px]">9+</Badge> },
  { icon: <Round cls="bg-black text-[#1ed760]"><FaSpotify size={36} /></Round>, mark: 'dot' },
  { icon: <Round cls="bg-[#75aadb] font-['Liberation_Serif',serif] text-[25px] text-white">R</Round>, mark: 'dot' },
  { icon: <Word size={36} />, mark: 'dot' },
  { icon: <Round cls="bg-white ring-1 ring-gray-300"><Slack /></Round>, mark: 'dot' },
  { icon: <Moba />, mark: 'dot' }, { icon: <Acrobat />, mark: 'dot' },
  { icon: <Round cls="bg-[#1d91ec] text-white"><FaDocker size={26} /></Round>, mark: 'dot' },
  { icon: <Notepad />, mark: 'dot' }, { icon: <Gear />, mark: 'dot' }, { icon: <Desmume />, mark: 'dot' },
];

const TaskbarApp = ({ icon, mark, badge }: { icon: Node; mark?: string; badge?: Node }) => (
  <div className="relative flex h-full w-[66.05px] items-center justify-center">
    {mark === 'active' && <span className="absolute top-[5px] left-[5px] h-[58px] w-[56px] rounded-[6px] border-b-2 border-[#cdd3e6] bg-[#eceffa]" />}
    {mark === 'alert' && <span className="absolute top-1 left-[3px] h-[60px] w-[60px] rounded-[6px] bg-[#fce5e8]" />}
    <span className="relative mb-[3px] flex">{icon}</span>
    {mark && (
      <span className={mark === 'active' ? 'absolute bottom-[7px] h-[5px] w-6 rounded-full bg-[#0078d4]' : mark === 'alert' ? 'absolute bottom-[7px] h-[5px] w-[9px] rounded-full bg-[#c42b1c]' : 'absolute bottom-[7px] h-[5px] w-[9px] rounded-full bg-[#7d828c]'} />
    )}
    {badge}
  </div>
);

const Taskbar = () => (
  <div className="flex h-[72px] items-center border-t-2 border-[#b0b6c2] bg-[linear-gradient(90deg,#e3eef8_0%,#e1edf7_18%,#d4e0f6_29%,#d3daf1_35%,#d4e2f7_44%,#d6ddf1_62%,#d9ddee_76%,#e0ebf6_87%,#e2eef7_100%)]">
    <div className="relative h-full w-[241px]">
      <span className="absolute top-[19px] left-[18px] size-[30px] rounded-full bg-linear-to-br from-[#edb62f] to-[#f46a0d]" />
      <Badge cls="top-2 left-[32px] bg-[#c42b1c] text-[17px]">1</Badge>
    </div>
    <div className="flex h-full">{apps.map((a, i) => <TaskbarApp key={i} {...a} />)}</div>
    <div className="ml-auto flex items-center text-[#1b1b1b]">
      <ChevronUp size={24} strokeWidth={1.9} />
      <Wifi size={25} strokeWidth={1.8} className="ml-6" />
      <Volume2 size={23} strokeWidth={1.6} className="ml-[11px]" />
      <svg width="25" height="23" viewBox="0 0 25 23" className="mb-1 ml-[13px]">
        <rect x="3" y="6" width="18" height="14" rx="3" fill="none" stroke="#1b1b1b" strokeWidth="1.700" />
        <rect x="5.500" y="8.500" width="13" height="9" rx="1" fill="#1b1b1b" /><path d="M22 10.500h1.500q1 3 0 6H22Z" fill="#1b1b1b" />
        <path d="M4 0 0 7h3L1.500 12 7 4.500H4L6 0Z" fill="#1b1b1b" stroke="#e0ebf6" strokeWidth=".6" />
      </svg>
      <div className="-mt-[4px] ml-[24px] text-right text-[17px] leading-[24px] tracking-[0.2px]">13:28<br />29/12/2023</div>
      <Bell size={25} strokeWidth={1.6} className="mr-[30px] mb-[3px] ml-[11px]" />
    </div>
  </div>
);

export default function App() {
  return (
    <div className="flex h-[1080px] w-[1920px] flex-col overflow-hidden bg-white font-['Open_Sans','Noto_Sans',sans-serif]">
      <TabStrip />
      <Toolbar />
      <Bookmarks />
      <Page />
      <HScroll />
      <Taskbar />
    </div>
  );
}
